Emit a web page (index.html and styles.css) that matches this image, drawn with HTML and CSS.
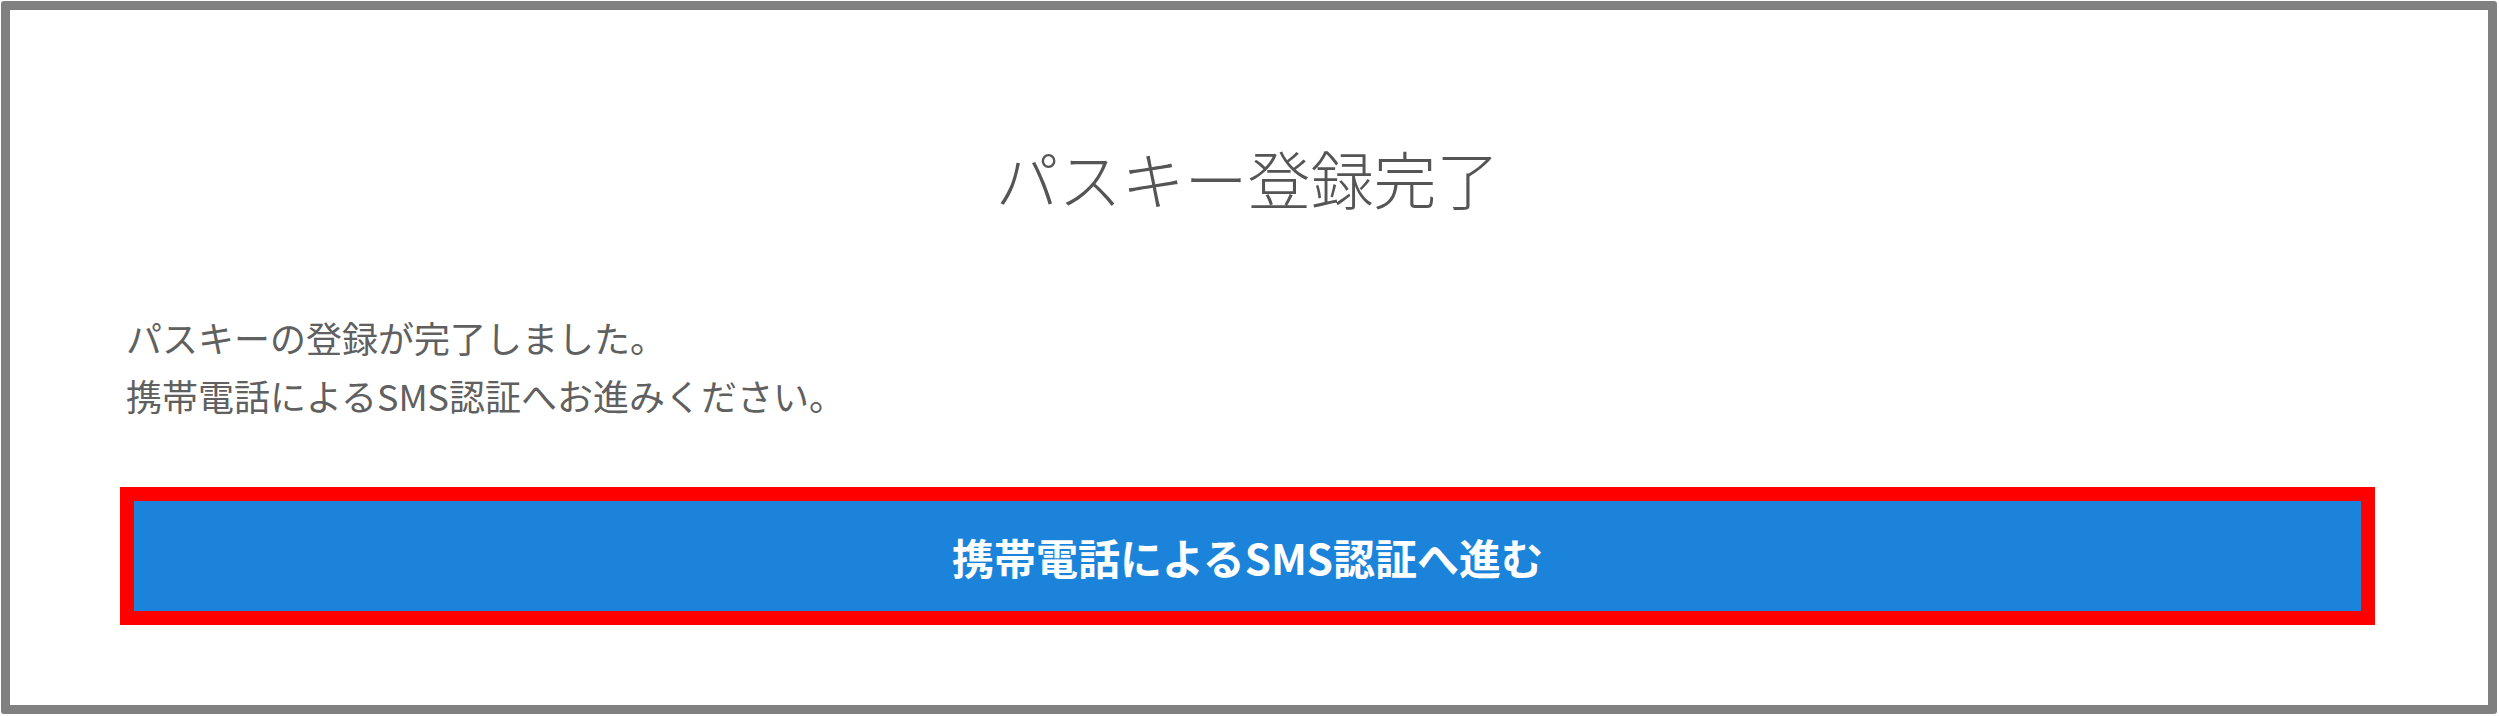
FILE: index.html
```html
<!DOCTYPE html>
<html lang="ja">
<head>
<meta charset="utf-8">
<title>パスキー登録完了</title>
<link rel="stylesheet" href="styles.css">
</head>
<body>
<div class="frame">
  <h1 class="title">パスキー登録完了</h1>
  <p class="message">パスキーの登録が完了しました。<br>携帯電話によるSMS認証へお進みください。</p>
  <div class="highlight">
    <button class="primary-btn" type="button">携帯電話によるSMS認証へ進む</button>
  </div>
</div>
</body>
</html>
```

FILE: styles.css
```css
html, body {
  margin: 0;
  padding: 0;
  background: #ffffff;
}

body {
  font-family: "Noto Sans CJK JP", "Noto Sans", sans-serif;
}

.frame {
  box-sizing: border-box;
  width: 2496px;
  height: 713px;
  margin: 1px 2px 2px 1px;
  border: 9px solid #808080;
  border-radius: 3px;
  background: #ffffff;
  padding: 120px 113px 0 110px;
  display: flex;
  flex-direction: column;
}

.title {
  margin: 0;
  font-size: 63px;
  line-height: 94px;
  font-weight: 300;
  color: #555555;
  text-align: center;
}

.message {
  margin: 85px 0 0 0;
  padding-left: 6px;
  font-size: 36px;
  line-height: 57.6px;
  color: #606060;
}

.highlight {
  margin-top: 63px;
  border: 14px solid #ff0000;
  display: flex;
}

.primary-btn {
  flex: 1;
  height: 110px;
  border: none;
  margin: 0;
  padding: 0;
  background: #1b84da;
  color: #ffffff;
  font-family: "Noto Sans CJK JP", "Noto Sans", sans-serif;
  font-size: 42px;
  font-weight: 700;
  cursor: pointer;
}
```
